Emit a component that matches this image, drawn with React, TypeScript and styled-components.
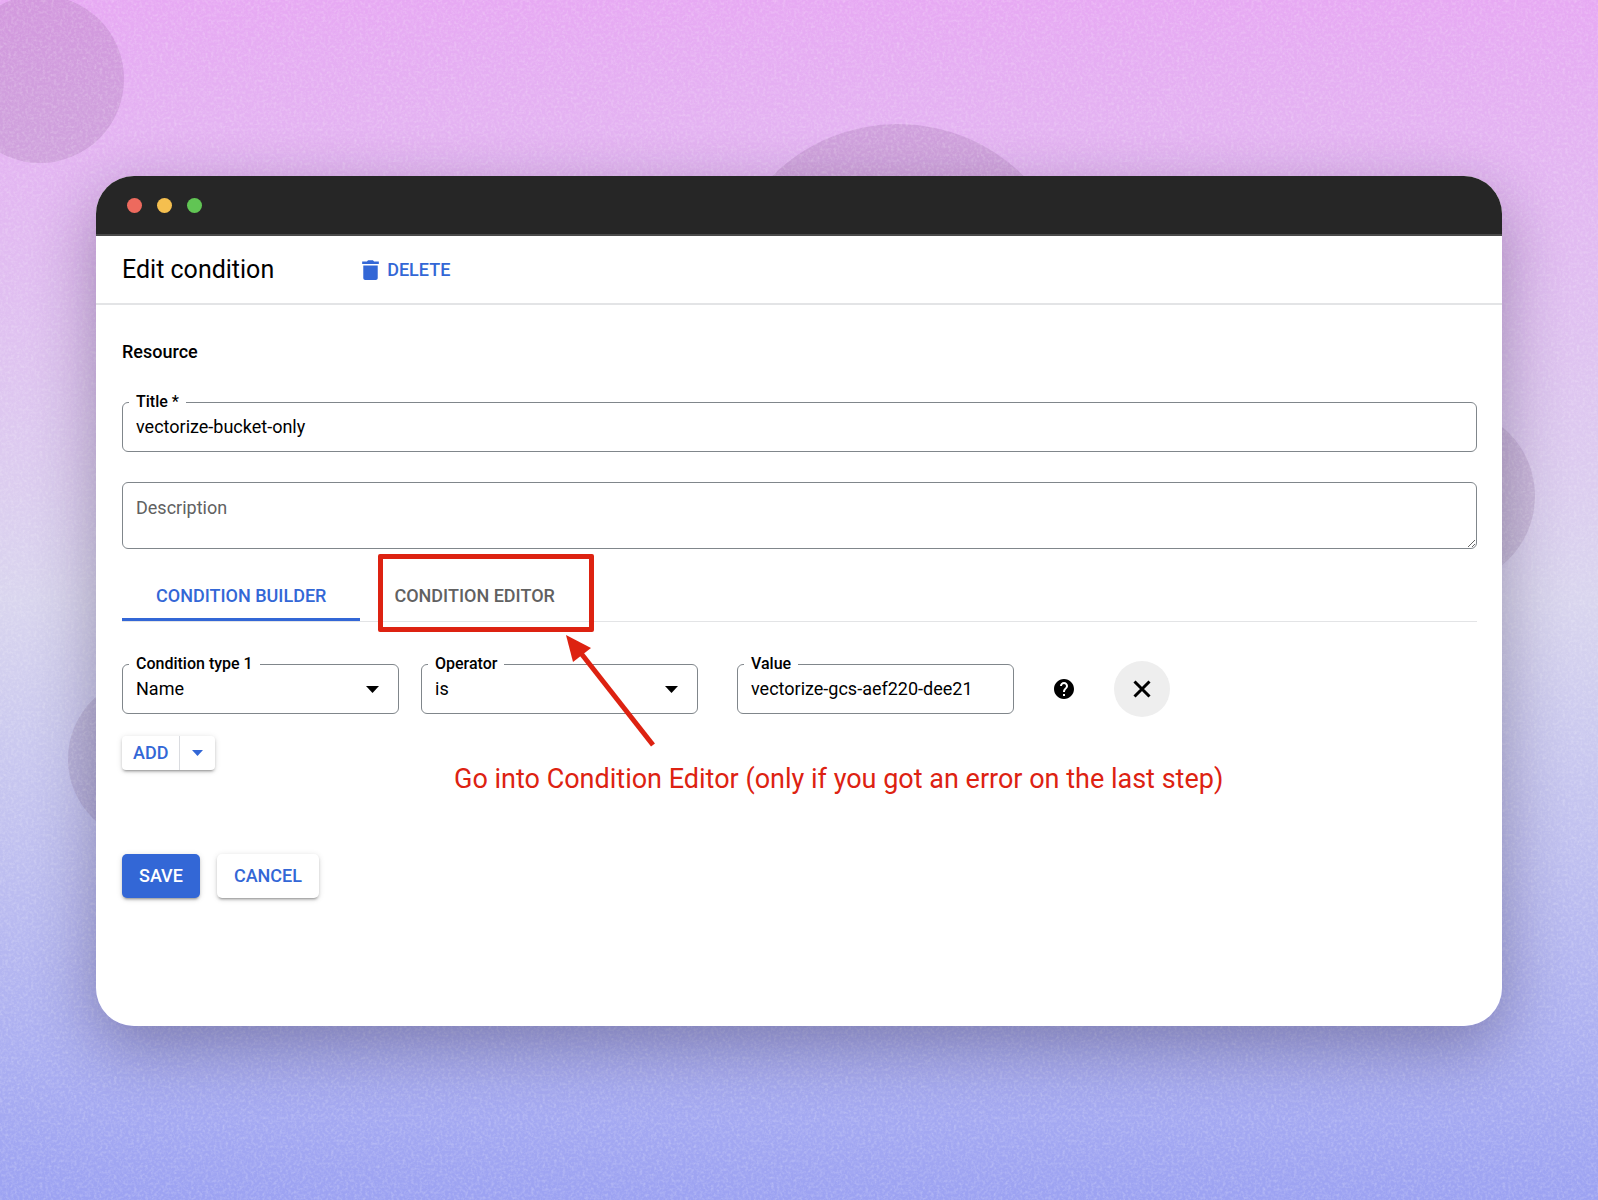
import React, { useState } from 'react';
import styled, { createGlobalStyle } from 'styled-components';
import { MdHelp } from 'react-icons/md';

const color = {
  blue: '#3367d6',
  red: '#dd2211',
  line: '#80868b',
  rule: '#e3e4e6',
  muted: '#616161',
};

const GlobalStyle = createGlobalStyle`
  *, *::before, *::after { box-sizing: border-box; }
  body { margin: 0; }
  body, button, input, select, textarea { font-family: Roboto, "Liberation Sans", sans-serif; }
`;

const Stage = styled.div`
  position: relative;
  min-height: 100vh;
  padding: 176px 96px 174px;
  overflow: hidden;
  background: linear-gradient(#e7a9f3 0%, #d9d5ee 50%, #9ca2f2 100%);
`;

const Bubble = styled.div<{ $size: number; $x: string; $y: number }>`
  position: absolute;
  left: ${(p) => p.$x};
  top: ${(p) => p.$y}px;
  width: ${(p) => p.$size}px;
  height: ${(p) => p.$size}px;
  border-radius: 50%;
  background: rgba(90, 60, 100, 0.14);
`;

const Grain = styled.svg`
  position: absolute;
  inset: 0;
  width: 100%;
  height: 100%;
`;

const Window = styled.div`
  position: relative;
  border-radius: 38px;
  overflow: hidden;
  background: #fff;
`;

const WindowShadow = styled.div`
  position: relative;
  border-radius: 38px;
  box-shadow: 0 22px 64px rgba(20, 10, 40, 0.32);
`;

const TitleBar = styled.div`
  display: flex;
  align-items: center;
  gap: 15px;
  height: 60px;
  padding-left: 31px;
  background: #262626;
  border-bottom: 2px solid #4a4a4a;
`;

const Dot = styled.span<{ $fill: string }>`
  width: 15px;
  height: 15px;
  border-radius: 50%;
  background: ${(p) => p.$fill};
`;

const Header = styled.header`
  display: flex;
  align-items: center;
  gap: 88px;
  height: 69px;
  padding: 0 26px;
  border-bottom: 2px solid ${color.rule};
`;

const Heading = styled.h1`
  margin: 0;
  font-size: 25px;
  font-weight: 400;
  line-height: 32px;
`;

const TextButton = styled.button`
  display: flex;
  align-items: center;
  gap: 8px;
  padding: 0;
  border: 0;
  background: none;
  color: ${color.blue};
  font-size: 18px;
  font-weight: 500;
  line-height: 24px;
`;

const Form = styled.form`
  padding: 35px 25px 128px 26px;
`;

const SectionTitle = styled.h2`
  margin: 0 0 38px;
  font-size: 18px;
  font-weight: 500;
  line-height: 24px;
`;

const Field = styled.div<{ $width?: number }>`
  position: relative;
  display: flex;
  ${(p) => p.$width && `flex: 0 1 ${p.$width}px; min-width: 0;`}
`;

const FloatingLabel = styled.label`
  position: absolute;
  top: -10px;
  left: 7px;
  padding: 0 7px;
  background: #fff;
  font-size: 16px;
  font-weight: 500;
  line-height: 20px;
`;

const TextInput = styled.input`
  width: 100%;
  height: 50px;
  padding: 0 13px 2px;
  border: 1px solid ${color.line};
  border-radius: 6px;
  background: #fff;
  color: #000;
  font-size: 18px;
  line-height: 24px;
`;

const SelectInput = styled.select`
  width: 100%;
  height: 50px;
  padding: 0 40px 0 13px;
  border: 1px solid ${color.line};
  border-radius: 6px;
  appearance: none;
  background: #fff;
  color: #000;
  font-size: 18px;
  line-height: 24px;
`;

const SelectCaret = styled.svg`
  position: absolute;
  top: 22px;
  right: 20px;
  pointer-events: none;
`;

const TextArea = styled.textarea`
  display: block;
  width: 100%;
  height: 67px;
  margin-top: 30px;
  padding: 13px;
  border: 1px solid ${color.line};
  border-radius: 6px;
  resize: vertical;
  font-size: 18px;
  line-height: 24px;
  &::placeholder { color: ${color.muted}; opacity: 1; }
`;

const TabList = styled.div`
  display: flex;
  margin-top: 22px;
  border-bottom: 1px solid ${color.rule};
`;

const Tab = styled.button<{ $active: boolean }>`
  position: relative;
  height: 50px;
  padding: 0 34px;
  border: 0;
  background: none;
  color: ${(p) => (p.$active ? color.blue : color.muted)};
  box-shadow: ${(p) => (p.$active ? `inset 0 -3px ${color.blue}` : 'none')};
  font-size: 18px;
  font-weight: 500;
  line-height: 24px;
`;

const Highlight = styled.span`
  position: absolute;
  inset: -17px -5px -11px 18px;
  border: 5px solid ${color.red};
  border-radius: 2px;
  pointer-events: none;
`;

const Panel = styled.div`
  position: relative;
  padding-top: 39px;
`;

const ConditionRow = styled.div`
  display: flex;
  align-items: center;
  gap: 38px;
`;

const SelectPair = styled.div`
  display: flex;
  gap: 22px;
  flex: 0 1 577px;
  min-width: 0;
`;

const HelpButton = styled.button`
  display: flex;
  padding: 0;
  border: 0;
  background: none;
  color: #000;
`;

const RemoveButton = styled.button`
  display: flex;
  align-items: center;
  justify-content: center;
  width: 56px;
  height: 56px;
  padding: 0;
  border: 0;
  border-radius: 50%;
  background: #eeeeee;
`;

const raised = '0 3px 2px -2px rgba(0,0,0,.22), 0 2px 3px rgba(0,0,0,.16), 0 1px 6px rgba(0,0,0,.12)';

const SplitButton = styled.div`
  display: inline-flex;
  margin-top: 19px;
  border-radius: 4px;
  box-shadow: ${raised};
`;

const SplitPart = styled.button`
  display: flex;
  align-items: center;
  height: 34px;
  padding: 0 11px;
  border: 0;
  background: none;
  color: ${color.blue};
  font-size: 18px;
  font-weight: 500;
  line-height: 24px;
  & + & { padding: 0 12px; border-left: 1px solid #dadce0; }
`;

const Actions = styled.div`
  display: flex;
  gap: 17px;
  margin-top: 84px;
`;

const ActionButton = styled.button<{ $primary?: boolean }>`
  height: 44px;
  padding: 0 17px;
  border: 0;
  border-radius: 5px;
  background: ${(p) => (p.$primary ? color.blue : '#fff')};
  color: ${(p) => (p.$primary ? '#fff' : color.blue)};
  box-shadow: ${raised};
  font-size: 18px;
  font-weight: 500;
  line-height: 24px;
`;

const Arrow = styled.svg`
  position: absolute;
  top: 8px;
  left: 438px;
  pointer-events: none;
`;

const Note = styled.p`
  position: absolute;
  top: 140px;
  left: 332px;
  margin: 0;
  color: ${color.red};
  font-size: 27px;
  line-height: 34px;
  white-space: nowrap;
`;

const Caret = () => (
  <SelectCaret width="13" height="7" viewBox="0 0 13 7" aria-hidden="true">
    <path d="M0 0h13L6.5 7z" />
  </SelectCaret>
);

export default function App() {
  const [title, setTitle] = useState('vectorize-bucket-only');
  const [value, setValue] = useState('vectorize-gcs-aef220-dee21');

  return (
    <Stage>
      <GlobalStyle />
      <Bubble $size={168} $x="-44px" $y={-5} />
      <Bubble $size={356} $x="calc(50% - 79px)" $y={124} />
      <Bubble $size={178} $x="calc(100% - 241px)" $y={407} />
      <Bubble $size={166} $x="68px" $y={676} />
      <Grain aria-hidden="true">
        <filter id="grain">
          <feTurbulence type="fractalNoise" baseFrequency="0.35" numOctaves="2" seed="4" />
          <feColorMatrix values="0 0 0 0 1  0 0 0 0 1  0 0 0 0 1  0.9 0.5 0 0 -0.6" />
        </filter>
        <rect width="100%" height="100%" filter="url(#grain)" opacity="0.45" />
      </Grain>

      <WindowShadow>
        <Window>
          <TitleBar>
            <Dot $fill="#ed6a5e" />
            <Dot $fill="#f5bf4f" />
            <Dot $fill="#61c554" />
          </TitleBar>

          <Header>
            <Heading>Edit condition</Heading>
            <TextButton type="button">
              <svg width="17" height="20" viewBox="4.5 3 15 18" fill="currentColor" aria-hidden="true">
                <path d="M5.500 19.200c0 1 .8 1.800 1.800 1.800h9.400c1 0 1.800-.8 1.800-1.800V8h-13zM19.500 4.300h-4.300l-1-1.100h-4.400l-1 1.100h-4.300v2.200h15z" />
              </svg>
              DELETE
            </TextButton>
          </Header>

          <Form onSubmit={(e) => e.preventDefault()}>
            <SectionTitle>Resource</SectionTitle>

            <Field>
              <TextInput id="title" value={title} onChange={(e) => setTitle(e.target.value)} />
              <FloatingLabel htmlFor="title">Title *</FloatingLabel>
            </Field>
            <TextArea aria-label="Description" placeholder="Description" />

            <TabList role="tablist">
              <Tab type="button" role="tab" aria-selected="true" $active>
                CONDITION BUILDER
              </Tab>
              <Tab type="button" role="tab" aria-selected="false" $active={false}>
                CONDITION EDITOR
                <Highlight />
              </Tab>
            </TabList>

            <Panel role="tabpanel">
              <ConditionRow>
                <SelectPair>
                  <Field $width={277}>
                    <SelectInput id="type" defaultValue="Name">
                      <option>Name</option>
                    </SelectInput>
                    <FloatingLabel htmlFor="type">Condition type 1</FloatingLabel>
                    <Caret />
                  </Field>
                  <Field $width={277}>
                    <SelectInput id="operator" defaultValue="is">
                      <option>is</option>
                    </SelectInput>
                    <FloatingLabel htmlFor="operator">Operator</FloatingLabel>
                    <Caret />
                  </Field>
                </SelectPair>
                <Field $width={277}>
                  <TextInput id="value" value={value} onChange={(e) => setValue(e.target.value)} />
                  <FloatingLabel htmlFor="value">Value</FloatingLabel>
                </Field>
                <HelpButton type="button" aria-label="Help">
                  <MdHelp size={24} stroke="#fff" strokeWidth={0} />
                </HelpButton>
                <RemoveButton type="button" aria-label="Remove condition">
                  <svg width="18" height="18" viewBox="0 0 18 18" stroke="#000" strokeWidth="3" aria-hidden="true">
                    <path d="M1.500 1.500l15 15M16.500 1.500l-15 15" />
                  </svg>
                </RemoveButton>
              </ConditionRow>

              <SplitButton>
                <SplitPart type="button">ADD</SplitPart>
                <SplitPart type="button" aria-label="More add options">
                  <svg width="11" height="6" viewBox="0 0 11 6" fill="currentColor" aria-hidden="true">
                    <path d="M0 0h11L5.500 6z" />
                  </svg>
                </SplitPart>
              </SplitButton>

              <Arrow width="100" height="120" viewBox="0 0 100 120" aria-hidden="true">
                <path d="M20 22L93 115" stroke={color.red} strokeWidth="5" />
                <path d="M6 5L31 18L13 32z" fill={color.red} />
              </Arrow>
              <Note>Go into Condition Editor (only if you got an error on the last step)</Note>
            </Panel>

            <Actions>
              <ActionButton type="submit" $primary>
                SAVE
              </ActionButton>
              <ActionButton type="button">CANCEL</ActionButton>
            </Actions>
          </Form>
        </Window>
      </WindowShadow>
    </Stage>
  );
}
